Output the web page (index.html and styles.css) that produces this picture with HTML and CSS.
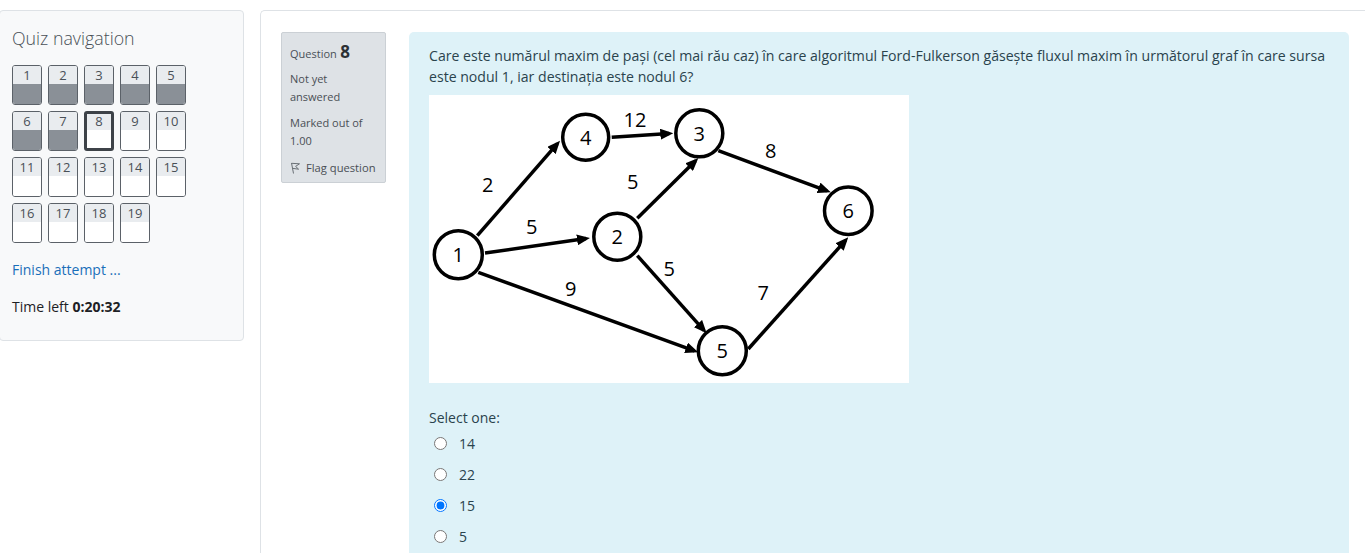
FILE: index.html
```html
<!DOCTYPE html>
<html lang="ro">
<head>
<meta charset="utf-8">
<title>Quiz</title>
<link rel="stylesheet" href="styles.css">
</head>
<body>
<div class="page">
  <aside class="nav-block">
    <h3 class="nav-title">Quiz navigation</h3>
    <div class="qn-grid">
      <a class="qn answered"><span class="qn-num">1</span><span class="qn-state"></span></a>
      <a class="qn answered"><span class="qn-num">2</span><span class="qn-state"></span></a>
      <a class="qn answered"><span class="qn-num">3</span><span class="qn-state"></span></a>
      <a class="qn answered"><span class="qn-num">4</span><span class="qn-state"></span></a>
      <a class="qn answered"><span class="qn-num">5</span><span class="qn-state"></span></a>
      <a class="qn answered"><span class="qn-num">6</span><span class="qn-state"></span></a>
      <a class="qn answered"><span class="qn-num">7</span><span class="qn-state"></span></a>
      <a class="qn current"><span class="qn-num">8</span><span class="qn-state"></span></a>
      <a class="qn"><span class="qn-num">9</span><span class="qn-state"></span></a>
      <a class="qn"><span class="qn-num">10</span><span class="qn-state"></span></a>
      <a class="qn"><span class="qn-num">11</span><span class="qn-state"></span></a>
      <a class="qn"><span class="qn-num">12</span><span class="qn-state"></span></a>
      <a class="qn"><span class="qn-num">13</span><span class="qn-state"></span></a>
      <a class="qn"><span class="qn-num">14</span><span class="qn-state"></span></a>
      <a class="qn"><span class="qn-num">15</span><span class="qn-state"></span></a>
      <a class="qn"><span class="qn-num">16</span><span class="qn-state"></span></a>
      <a class="qn"><span class="qn-num">17</span><span class="qn-state"></span></a>
      <a class="qn"><span class="qn-num">18</span><span class="qn-state"></span></a>
      <a class="qn"><span class="qn-num">19</span><span class="qn-state"></span></a>
    </div>
    <a class="finish" href="#">Finish attempt ...</a>
    <div class="timer">Time left <strong>0:20:32</strong></div>
  </aside>

  <main class="region-main">
    <div class="que">
      <div class="info">
        <h3 class="no"><span class="no-label">Question</span> <span class="qno">8</span></h3>
        <div class="state">Not yet answered</div>
        <div class="grade">Marked out of 1.00</div>
        <div class="flag">
          <svg class="flag-icon" width="11" height="12" viewBox="0 0 11 12" aria-hidden="true">
            <path d="M1.5 1 L3.5 11.5" stroke="#6a7076" stroke-width="1" fill="none"/>
            <path d="M1.6 1.3 L9.5 1.8 L5.6 4.4 L8.6 7.2 L2.4 6.3" stroke="#6a7076" stroke-width="1" fill="none" stroke-linejoin="round"/>
          </svg>
          <span>Flag question</span>
        </div>
      </div>
      <div class="formulation">
        <p class="qtext">Care este numărul maxim de pași (cel mai rău caz) în care algoritmul Ford-Fulkerson găsește fluxul maxim în următorul graf în care sursa este nodul 1, iar destinația este nodul 6?</p>
        <div class="graph">
          <svg width="480" height="288" viewBox="0 0 480 288" role="img" aria-label="Graf">
            <defs>
              <marker id="arrow" markerUnits="userSpaceOnUse" markerWidth="13" markerHeight="11" refX="9" refY="5.5" orient="auto">
                <path d="M0,0 L13,5.5 L0,11 Z" fill="#000"/>
              </marker>
            </defs>
            <g stroke="#000" stroke-width="3.5" fill="none" marker-end="url(#arrow)">
              <line x1="48.3" y1="140.7" x2="128.4" y2="48.7"/>
              <line x1="182.7" y1="42.3" x2="240.3" y2="38.6"/>
              <line x1="289.3" y1="55.7" x2="398" y2="95.9"/>
              <line x1="56" y1="158" x2="157" y2="143.6"/>
              <line x1="208.3" y1="123.3" x2="266.5" y2="65.8"/>
              <line x1="208.3" y1="160.7" x2="275" y2="235.3"/>
              <line x1="49.3" y1="177.3" x2="265.5" y2="255.9"/>
              <line x1="319.3" y1="254" x2="416.6" y2="145.3"/>
            </g>
            <g stroke="#000" stroke-width="3.5" fill="#fff">
              <circle cx="29.3" cy="159.7" r="24"/>
              <circle cx="156.7" cy="42.3" r="23"/>
              <circle cx="270.3" cy="38.3" r="23.5"/>
              <circle cx="188.3" cy="141.7" r="23.5"/>
              <circle cx="419.3" cy="115.7" r="23.8"/>
              <circle cx="293.3" cy="255.7" r="24"/>
            </g>
            <g class="graph-text" text-anchor="middle">
              <text x="29.3" y="167">1</text>
              <text x="156.7" y="49.5">4</text>
              <text x="270.3" y="45.5">3</text>
              <text x="188.3" y="149">2</text>
              <text x="419.3" y="123">6</text>
              <text x="293.3" y="263">5</text>
              <text x="58.7" y="97">2</text>
              <text x="206" y="32">12</text>
              <text x="341.7" y="63">8</text>
              <text x="203.7" y="93.5">5</text>
              <text x="102.7" y="139">5</text>
              <text x="240.3" y="181">5</text>
              <text x="141.7" y="200.5">9</text>
              <text x="334.3" y="204.5">7</text>
            </g>
          </svg>
        </div>
        <div class="ablock">
          <div class="prompt">Select one:</div>
          <div class="answer">
            <label class="option"><input type="radio" name="q8"><span>14</span></label>
            <label class="option"><input type="radio" name="q8"><span>22</span></label>
            <label class="option"><input type="radio" name="q8" checked><span>15</span></label>
            <label class="option"><input type="radio" name="q8"><span>5</span></label>
          </div>
        </div>
      </div>
    </div>
  </main>
</div>
</body>
</html>
```

FILE: styles.css
```css
html, body {
  margin: 0;
  padding: 0;
  overflow: hidden;
  background: #fff;
}

body {
  font-family: "Open Sans", "Noto Sans", sans-serif;
  color: #1d2125;
  font-size: 14px;
  line-height: 21px;
}

.page {
  display: flex;
  align-items: flex-start;
  padding-top: 10px;
  width: 1400px;
}

/* ---------- Quiz navigation block ---------- */
.nav-block {
  flex: 0 0 auto;
  box-sizing: border-box;
  width: 245px;
  height: 331px;
  margin-left: -1px;
  padding: 16px 12px 0 12px;
  background: #f8f9fa;
  border: 1px solid #dee2e6;
  border-radius: 4px;
}

.nav-title {
  margin: 0 0 16px;
  font-size: 17.8px;
  font-weight: 300;
  line-height: 22px;
  color: #495057;
}

.qn-grid {
  display: grid;
  grid-template-columns: repeat(5, 30px);
  grid-auto-rows: 40px;
  gap: 6px;
}

.qn {
  display: flex;
  flex-direction: column;
  box-sizing: border-box;
  width: 30px;
  height: 40px;
  border: 1px solid #5b6168;
  border-radius: 3px;
  overflow: hidden;
  background: #fff;
}

.qn-num {
  display: block;
  height: 18px;
  background: #e9ecef;
  font-size: 13px;
  line-height: 18px;
  text-align: center;
  color: #495057;
}

.qn-state {
  flex: 1;
  background: #fff;
}

.qn.answered .qn-state {
  background: #8a9097;
}

.qn.current {
  border: 3px solid #3d4248;
}

.qn.current .qn-num {
  height: 16px;
  line-height: 15px;
}

.finish {
  display: block;
  margin-top: 16px;
  color: #1a6fb9;
  text-decoration: none;
  font-size: 14px;
}

.timer {
  margin-top: 16px;
  font-size: 14px;
  color: #1d2125;
}

.timer strong {
  font-weight: 700;
}

/* ---------- Main region ---------- */
.region-main {
  flex: 1 1 auto;
  margin-left: 16px;
  min-height: 560px;
  padding: 21px 0 0 20px;
  border-top: 1px solid #dee2e6;
  border-left: 1px solid #dee2e6;
  border-top-left-radius: 5px;
}

.que {
  display: flex;
  align-items: flex-start;
}

.info {
  flex: 0 0 auto;
  box-sizing: border-box;
  width: 105px;
  height: 151px;
  margin-right: 23px;
  padding: 8px 8px 0 8px;
  background: #dee2e6;
  border: 1px solid #cbd0d5;
  border-radius: 2px;
  color: #4a4f55;
  font-size: 11px;
  line-height: 18px;
}

.no {
  margin: 0;
  font-weight: 400;
  line-height: 22px;
  color: #33383d;
}

.no-label {
  font-size: 11px;
  color: #495057;
}

.qno {
  font-size: 17px;
  font-weight: 700;
  color: #2b3035;
}

.state {
  margin-top: 5px;
}

.grade {
  margin-top: 8px;
}

.flag {
  display: flex;
  align-items: center;
  gap: 5px;
  margin-top: 9px;
  font-size: 11.2px;
}

.flag-icon {
  flex: 0 0 auto;
}

.formulation {
  box-sizing: border-box;
  width: 940px;
  min-height: 560px;
  padding: 13px 20px 0 20px;
  background: #def2f8;
  border-radius: 5px;
  color: #2a434d;
  font-size: 14px;
}

.qtext {
  margin: 0 0 8px;
  font-size: 14.1px;
  line-height: 21px;
}

.graph {
  width: 480px;
  height: 288px;
  background: #fff;
}

.graph svg {
  display: block;
}

.graph-text {
  font-family: "Open Sans", "Noto Sans", sans-serif;
  font-size: 20px;
  fill: #000;
}

.ablock {
  margin-top: 24px;
}

.prompt {
  line-height: 21px;
}

.option {
  display: flex;
  align-items: center;
  height: 31px;
}

.option input {
  width: 13px;
  height: 13px;
  margin: 0 12px 0 5px;
}
```
